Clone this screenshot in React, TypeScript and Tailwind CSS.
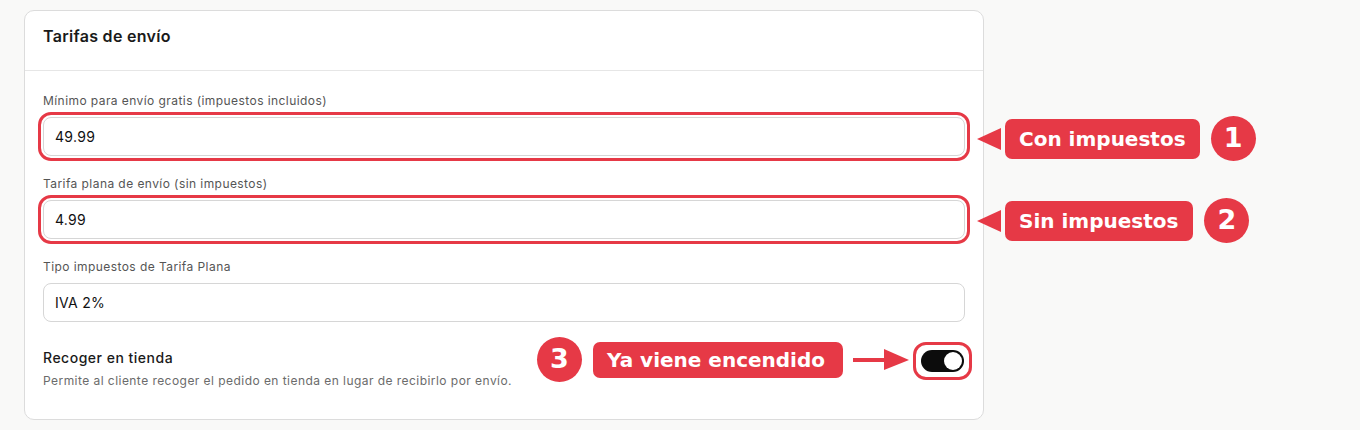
import React from "react";

const RED = "#e63946";

function Field({ label, value, highlight }: { label: string; value: string; highlight?: boolean }) {
  return (
    <div className="flex flex-col">
      <label className="text-[12px] leading-[20px] text-[#555555] tracking-[0.43px]">{label}</label>
      <div
        className={
          "mt-[6px] h-[39px] rounded-[8px] border border-[#d6d6d6] bg-white px-[11px] flex items-center text-[14px] text-[#111111] tracking-[0.3px] " +
          (highlight ? "outline-[3px] outline-solid outline-offset-[2px] outline-[#e63946]" : "")
        }
      >
        {value}
      </div>
    </div>
  );
}

function LeftArrow() {
  return (
    <svg width="26" height="24" viewBox="0 0 26 24" className="shrink-0">
      <polygon points="0,12 24,1 24,23" fill={RED} />
    </svg>
  );
}

function Pill({ children, h }: { children: React.ReactNode; h: string }) {
  return (
    <div
      className={
        "flex items-center rounded-[7px] bg-[#e63946] text-white font-bold text-[20px] " + h
      }
      style={{ fontFamily: '"DejaVu Sans", sans-serif' }}
    >
      {children}
    </div>
  );
}

function Num({ n }: { n: string }) {
  return (
    <div
      className="flex h-[45px] w-[45px] items-center justify-center rounded-full bg-[#e63946] text-white font-bold text-[27px] shrink-0"
      style={{ fontFamily: '"DejaVu Sans", sans-serif' }}
    >
      {n}
    </div>
  );
}

export default function App() {
  return (
    <div
      className="relative w-[1360px] h-[430px] bg-[#f9f9f8] pt-[10px] pl-[24px]"
      style={{ fontFamily: 'Inter, "Noto Sans", sans-serif' }}
    >
      <div className="w-[960px] rounded-[10px] border border-[#dcdcdc] bg-white">
        <div className="border-b border-[#e6e6e6] px-[18px] pt-[13px] pb-[21px]">
          <h2 className="text-[16px] leading-[25px] font-semibold text-[#1a1a1a] tracking-[0.3px]">Tarifas de envío</h2>
        </div>
        <div className="px-[18px] pt-[20px] pb-[30px] flex flex-col">
          <Field label="Mínimo para envío gratis (impuestos incluidos)" value="49.99" highlight />
          <div className="h-[18px]" />
          <Field label="Tarifa plana de envío (sin impuestos)" value="4.99" highlight />
          <div className="h-[18px]" />
          <Field label="Tipo impuestos de Tarifa Plana" value="IVA 2%" />
          <div className="mt-[26px] flex items-start justify-between">
            <div className="flex flex-col">
              <span className="text-[14px] leading-[20px] font-medium text-[#1a1a1a] tracking-[0.5px]">Recoger en tienda</span>
              <span className="mt-[5px] text-[12px] leading-[16px] text-[#6b6b6b] tracking-[0.45px]">
                Permite al cliente recoger el pedido en tienda en lugar de recibirlo por envío.
              </span>
            </div>
            <div className="mt-[2px] mr-[1px] rounded-[5px] outline-[3px] outline-solid outline-offset-[5px] outline-[#e63946]">
              <div className="relative h-[22px] w-[43px] rounded-full bg-[#0c0c0c]">
                <div className="absolute right-[2px] top-[2px] h-[18px] w-[18px] rounded-full bg-white" />
              </div>
            </div>
          </div>
        </div>
      </div>

      <div className="absolute left-[977px] top-[116px] flex items-center">
        <LeftArrow />
        <div className="ml-[2px]">
          <Pill h="h-[40px] pl-[14px] pr-[14px]">Con impuestos</Pill>
        </div>
        <div className="ml-[11px]">
          <Num n="1" />
        </div>
      </div>

      <div className="absolute left-[977px] top-[198px] flex items-center">
        <LeftArrow />
        <div className="ml-[2px]">
          <Pill h="h-[40px] pl-[14px] pr-[15px]">Sin impuestos</Pill>
        </div>
        <div className="ml-[11px]">
          <Num n="2" />
        </div>
      </div>

      <div className="absolute left-[537px] top-[337px] flex items-center">
        <Num n="3" />
        <div className="ml-[11px]">
          <Pill h="h-[36px] pl-[14px] pr-[18px]">Ya viene encendido</Pill>
        </div>
        <svg width="58" height="24" viewBox="0 0 58 24" className="ml-[10px] shrink-0">
          <rect x="0" y="10" width="33" height="4" fill={RED} />
          <polygon points="31,1 56,12 31,22" fill={RED} />
        </svg>
      </div>
    </div>
  );
}
